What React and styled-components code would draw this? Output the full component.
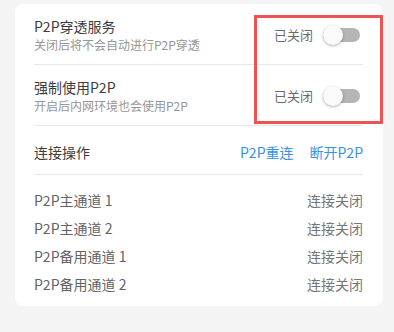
import React from "react";
import styled, { createGlobalStyle } from "styled-components";

const GlobalStyle = createGlobalStyle`
  html, body {
    margin: 0;
    padding: 0;
    background: #f4f4f5;
    font-family: "Noto Sans CJK SC", "Noto Sans", sans-serif;
  }
`;

const Page = styled.div`
  padding: 4px 11px 26px 15px;
`;

const Card = styled.div`
  position: relative;
  background: #ffffff;
  border-radius: 8px;
  padding: 0 20px 8px 19px;
`;

// rows with a title, a hint and a switch
const SettingRow = styled.div`
  display: flex;
  align-items: center;
  justify-content: space-between;
  padding: 12px 0 10px;
  border-bottom: 1px solid #e8e8e8;
`;

const TextBlock = styled.div`
  display: flex;
  flex-direction: column;
`;

const Title = styled.div`
  font-size: 14px;
  line-height: 20px;
  color: #3c3c3c;
`;

const Hint = styled.div`
  font-size: 12px;
  line-height: 18px;
  color: #969696;
`;

const SwitchWrap = styled.div`
  display: flex;
  align-items: center;
  gap: 10px;
  margin-right: 3px;
`;

const State = styled.span`
  font-size: 13px;
  line-height: 20px;
  color: #6a6a6a;
`;

const Track = styled.div`
  position: relative;
  width: 37px;
  height: 14px;
  border-radius: 7px;
  background: ${(p) => (p.$on ? "#8fc3f0" : "#b5b5b5")};
`;

const Knob = styled.div`
  position: absolute;
  top: -3px;
  left: ${(p) => (p.$on ? "17px" : "0")};
  width: 20px;
  height: 20px;
  border-radius: 50%;
  background: #fafafa;
  box-shadow: 0 1px 3px rgba(0, 0, 0, 0.3);
`;

const ActionRow = styled.div`
  display: flex;
  align-items: center;
  justify-content: space-between;
  padding: 16px 0 12px;
  border-bottom: 1px solid #e8e8e8;
`;

const Actions = styled.div`
  display: flex;
  gap: 16px;
`;

const Link = styled.a`
  font-size: 14px;
  line-height: 20px;
  color: #3692e2;
  cursor: pointer;
`;

const ChannelList = styled.div`
  padding-top: 11px;
`;

const Channel = styled.div`
  display: flex;
  justify-content: space-between;
  height: 28px;
  line-height: 28px;
  font-size: 14px;
  color: #636363;
`;

const Status = styled.span`
  color: #767676;
`;

// red annotation frame over the switches
const Highlight = styled.div`
  position: absolute;
  left: 239px;
  top: 11px;
  width: 123px;
  height: 103px;
  border: 3px solid #ec5353;
  pointer-events: none;
`;

function Switch({ on }) {
  return (
    <SwitchWrap>
      <State>{on ? "已开启" : "已关闭"}</State>
      <Track $on={on}>
        <Knob $on={on} />
      </Track>
    </SwitchWrap>
  );
}

const settings = [
  { title: "P2P穿透服务", hint: "关闭后将不会自动进行P2P穿透" },
  { title: "强制使用P2P", hint: "开启后内网环境也会使用P2P" },
];

const channels = ["P2P主通道 1", "P2P主通道 2", "P2P备用通道 1", "P2P备用通道 2"];

export default function App() {
  return (
    <Page>
      <GlobalStyle />
      <Card>
        {settings.map((s) => (
          <SettingRow key={s.title}>
            <TextBlock>
              <Title>{s.title}</Title>
              <Hint>{s.hint}</Hint>
            </TextBlock>
            <Switch on={false} />
          </SettingRow>
        ))}

        <ActionRow>
          <Title>连接操作</Title>
          <Actions>
            <Link>P2P重连</Link>
            <Link>断开P2P</Link>
          </Actions>
        </ActionRow>

        <ChannelList>
          {channels.map((c) => (
            <Channel key={c}>
              <span>{c}</span>
              <Status>连接关闭</Status>
            </Channel>
          ))}
        </ChannelList>

        <Highlight />
      </Card>
    </Page>
  );
}
